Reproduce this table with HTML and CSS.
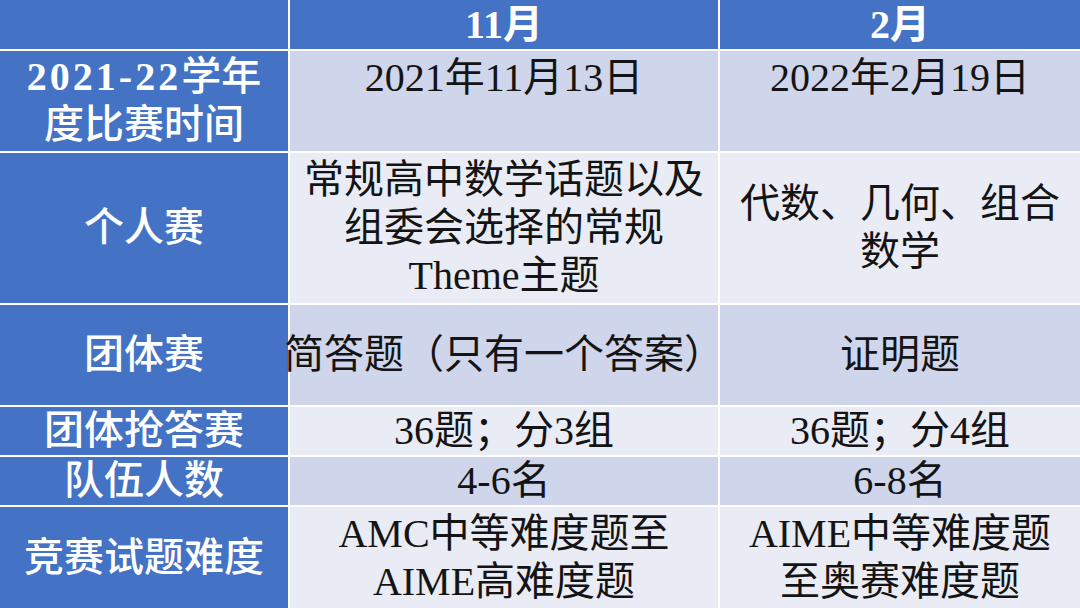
FILE: index.html
```html
<!DOCTYPE html>
<html lang="zh">
<head>
<meta charset="utf-8">
<title>比赛时间表</title>
<link rel="stylesheet" href="styles.css">
</head>
<body>
<div class="table">
  <div class="cell head"></div>
  <div class="cell head"><p class="txt"><span class="lat">11</span>月</p></div>
  <div class="cell head"><p class="txt"><span class="lat">2</span>月</p></div>

  <div class="cell side"><p class="txt"><span class="lat wide">2021-22</span>学年<br>度比赛时间</p></div>
  <div class="cell dark top"><p class="txt">2021年11月13日</p></div>
  <div class="cell dark top"><p class="txt">2022年2月19日</p></div>

  <div class="cell side"><p class="txt">个人赛</p></div>
  <div class="cell light"><p class="txt">常规高中数学话题以及<br>组委会选择的常规<br>Theme主题</p></div>
  <div class="cell light"><p class="txt">代数、几何、组合<br>数学</p></div>

  <div class="cell side"><p class="txt">团体赛</p></div>
  <div class="cell dark"><p class="txt nowrap">简答题（只有一个答案）</p></div>
  <div class="cell dark"><p class="txt">证明题</p></div>

  <div class="cell side"><p class="txt">团体抢答赛</p></div>
  <div class="cell light"><p class="txt">36题；分3组</p></div>
  <div class="cell light"><p class="txt">36题；分4组</p></div>

  <div class="cell side"><p class="txt">队伍人数</p></div>
  <div class="cell dark"><p class="txt">4-6名</p></div>
  <div class="cell dark"><p class="txt">6-8名</p></div>

  <div class="cell side"><p class="txt">竞赛试题难度</p></div>
  <div class="cell light"><p class="txt">AMC中等难度题至<br>AIME高难度题</p></div>
  <div class="cell light"><p class="txt">AIME中等难度题<br>至奥赛难度题</p></div>
</div>
</body>
</html>
```

FILE: styles.css
```css
html, body {
  margin: 0;
  padding: 0;
  background: #ffffff;
  overflow: hidden;
}

.table {
  display: grid;
  grid-template-columns: 288px 428px 1fr;
  grid-template-rows: 49px 100px 150px 100px 48px 48px 101px;
  gap: 2px;
  width: 1080px;
  height: 608px;
  background: #ffffff;
  font-family: "Liberation Serif", "Noto Sans CJK SC", serif;
  font-size: 40px;
  line-height: 48px;
  color: #141414;
}

.cell {
  display: flex;
  align-items: center;
  justify-content: center;
  text-align: center;
  min-width: 0;
}

.txt {
  margin: 0;
}

.head {
  background: #4472c4;
  color: #ffffff;
  font-weight: bold;
}

.side {
  background: #4472c4;
  color: #ffffff;
  font-weight: 500;
}

.lat {
  font-weight: bold;
}

.wide {
  letter-spacing: 3px;
}

.dark {
  background: #cfd5ea;
}

.light {
  background: #e9ebf5;
}

.top {
  align-items: flex-start;
  padding-top: 3px;
}

.nowrap {
  white-space: nowrap;
}
```
